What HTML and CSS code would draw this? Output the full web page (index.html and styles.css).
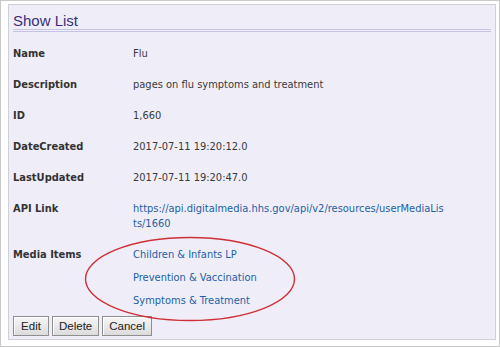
FILE: index.html
```
<!DOCTYPE html>
<html lang="en">
<head>
    <meta charset="UTF-8">
    <meta name="viewport" content="width=device-width, initial-scale=1.0">
    <title>Show List</title>
    <link rel="stylesheet" href="styles.css">
</head>
<body>
    <div id="panel">
        <h1 class="title">Show List</h1>
        <div class="props">
            <div class="row">
                <span class="name">Name</span>
                <span class="value">Flu</span>
            </div>
            <div class="row">
                <span class="name">Description</span>
                <span class="value">pages on flu symptoms and treatment</span>
            </div>
            <div class="row">
                <span class="name">ID</span>
                <span class="value">1,660</span>
            </div>
            <div class="row">
                <span class="name">DateCreated</span>
                <span class="value">2017-07-11 19:20:12.0</span>
            </div>
            <div class="row">
                <span class="name">LastUpdated</span>
                <span class="value">2017-07-11 19:20:47.0</span>
            </div>
            <div class="row">
                <span class="name">API Link</span>
                <span class="value"><a class="apilink" href="#">https://api.digitalmedia.hhs.gov/api/v2/resources/userMediaLists/1660</a></span>
            </div>
            <div class="row">
                <span class="name">Media Items</span>
                <span class="value items">
                    <a href="#">Children &amp; Infants LP</a>
                    <a href="#">Prevention &amp; Vaccination</a>
                    <a href="#">Symptoms &amp; Treatment</a>
                </span>
            </div>
        </div>
        <div class="buttons">
            <button type="button">Edit</button>
            <button type="button">Delete</button>
            <button type="button">Cancel</button>
        </div>
        <svg class="circle" width="212" height="86" viewBox="0 0 212 86">
            <ellipse cx="106" cy="43" rx="104.5" ry="41.5" fill="none" stroke="#cf2f36" stroke-width="1.4"/>
        </svg>
    </div>
</body>
</html>
```
FILE: styles.css
```
*{
    margin: 0;
    padding: 0;
    box-sizing: border-box;
}
body{
    width: 500px;
    height: 347px;
    border: 1px solid #c9c9c9;
    background-color: #fff;
    padding: 3px 3px 6px 7px;
    font-family: "DejaVu Sans Condensed", "DejaVu Sans", sans-serif;
    font-size: 11px;
    color: #3a3a3a;
}
#panel{
    position: relative;
    height: 100%;
    background-color: #efeef8;
    border: 1px solid #cfcfd6;
    padding: 0 4px;
}
.title{
    font-family: "Liberation Sans", Arial, sans-serif;
    font-weight: normal;
    font-size: 15px;
    line-height: 17px;
    color: #3b2e7c;
    padding-top: 7px;
    border-bottom: 3px double #c6c2e2;
    margin-bottom: 6px;
}
.row{
    display: grid;
    grid-template-columns: 120px 1fr;
    line-height: 15px;
    padding: 8px 0;
}
.name{
    font-weight: bold;
    color: #333;
}
.value a{
    color: #1d5fa6;
    text-decoration: none;
}
.apilink{
    display: block;
    width: 313px;
    word-break: break-all;
}
.items{
    display: flex;
    flex-direction: column;
    gap: 8px;
}
.buttons{
    display: flex;
    gap: 3px;
}
.buttons button{
    font-family: "Liberation Sans", Arial, sans-serif;
    font-size: 11.5px;
    min-width: 36px;
    height: 20px;
    padding: 0 6px;
    color: #222;
    background: linear-gradient(#f6f6f6, #dcdcdc);
    border: 1px solid #8e8e8e;
    box-shadow: inset 1px 1px 0 #fff;
}
.circle{
    position: absolute;
    left: 75px;
    top: 231px;
}
```
